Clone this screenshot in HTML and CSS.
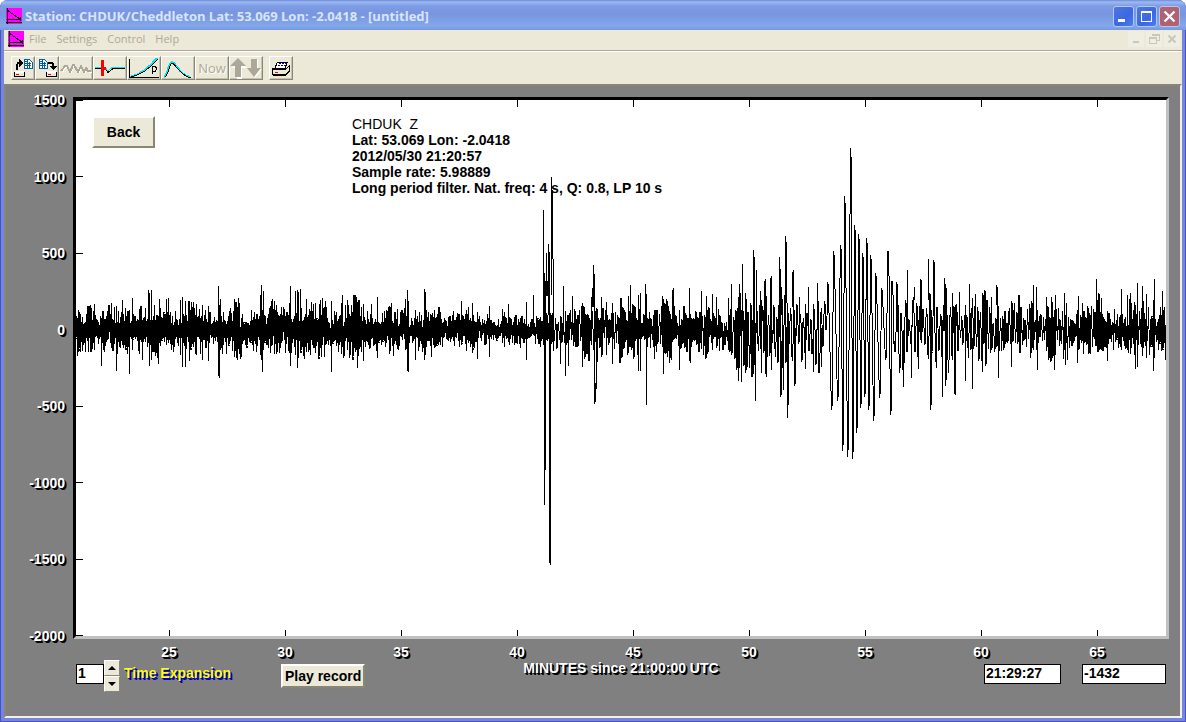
FILE: index.html
```html
<!DOCTYPE html>
<html lang="en">
<head>
    <meta charset="UTF-8">
    <meta name="viewport" content="width=device-width, initial-scale=1.0">
    <title>Station: CHDUK/Cheddleton</title>
    <link rel="stylesheet" href="styles.css">
</head>
<body>
    <div class="window">
        <!-- Title bar -->
        <header class="titlebar">
            <svg class="app-icon" viewBox="0 0 16 16" shape-rendering="crispEdges">
                <rect width="16" height="16" fill="#ff00ff"/>
                <path d="M1 0V16M0 14.5H16M1 2L14 11M1 11.5H15M14.5 9V13" stroke="#000" fill="none"/>
            </svg>
            <h1>Station: CHDUK/Cheddleton Lat: 53.069 Lon: -2.0418 - [untitled]</h1>
            <div class="window-buttons">
                <button type="button" aria-label="Minimize"><svg viewBox="0 0 19 19"><path d="M4 13.5H11" stroke="#fff" stroke-width="3"/></svg></button>
                <button type="button" aria-label="Maximize"><svg viewBox="0 0 19 19" shape-rendering="crispEdges"><path d="M4 5.5H15M4.5 5V14.5H14.5V5" fill="none" stroke="#fff"/><path d="M4 5H15" stroke="#fff" stroke-width="2"/></svg></button>
                <button type="button" class="close" aria-label="Close"><svg viewBox="0 0 19 19"><path d="M4.500 4.500L14.500 14.500M14.500 4.500L4.500 14.500" stroke="#fff" stroke-width="2.400"/></svg></button>
            </div>
        </header>

        <!-- Menu -->
        <nav class="menubar">
            <svg class="app-icon" viewBox="0 0 16 16" shape-rendering="crispEdges">
                <rect width="16" height="16" fill="#ff00ff"/>
                <path d="M1 0V16M0 14.5H16M1 2L14 11M1 11.5H15M14.5 9V13" stroke="#000" fill="none"/>
            </svg>
            <a href="#">File</a>
            <a href="#">Settings</a>
            <a href="#">Control</a>
            <a href="#">Help</a>
            <div class="child-buttons">
                <button type="button" aria-label="Minimize document"><svg viewBox="0 0 16 16"><path d="M5 11H11" stroke="#c9c7ba" stroke-width="2"/></svg></button>
                <button type="button" aria-label="Restore document"><svg viewBox="0 0 16 16" shape-rendering="crispEdges"><path d="M6.500 5V3.500H13.500V9.500H11M6 4H14M3.500 6.500H10.500V12.500H3.500ZM3 7H11" fill="none" stroke="#c9c7ba"/></svg></button>
                <button type="button" aria-label="Close document"><svg viewBox="0 0 16 16"><path d="M4.500 4.500L11.500 11.500M11.500 4.500L4.500 11.500" stroke="#c9c7ba" stroke-width="2"/></svg></button>
            </div>
        </nav>

        <!-- Toolbar -->
        <div class="toolbar">
            <button type="button" class="tool small" aria-label="Open">
                <svg viewBox="0 0 22 22" shape-rendering="crispEdges">
                    <path d="M12 2H17L20 5V11H12Z" fill="#fff" stroke="#0060a0"/>
                    <path d="M13 4.500H16M13 6.500H19M13 8.500H19M15.500 3V11M17.500 5V11" stroke="#0060a0"/>
                    <path d="M5 13V8L6 6H8" fill="none" stroke="#000" stroke-width="2"/>
                    <path d="M7 2L11 6L7 10Z" fill="#000"/>
                    <path d="M2.500 15.500H12.500V19.500H2.500Z" fill="#ece9d8" stroke="#000"/>
                    <path d="M3 14.500H12" stroke="#fff" stroke-width="2"/>
                    <path d="M4 17.500H7" stroke="#f00"/>
                </svg>
            </button>
            <button type="button" class="tool small" aria-label="Save">
                <svg viewBox="0 0 22 22" shape-rendering="crispEdges">
                    <path d="M3 2H8L11 5V11H3Z" fill="#fff" stroke="#0060a0"/>
                    <path d="M4 4.500H7M4 6.500H10M4 8.500H10M6.500 3V11M8.500 5V11" stroke="#0060a0"/>
                    <path d="M12 6H16L17 7V10" fill="none" stroke="#000" stroke-width="2"/>
                    <path d="M13 9H21L17 13Z" fill="#000"/>
                    <path d="M10.500 15.500H20.500V19.500H10.500Z" fill="#ece9d8" stroke="#000"/>
                    <path d="M11 14.500H20" stroke="#fff" stroke-width="2"/>
                    <path d="M12 17.500H15" stroke="#f00"/>
                </svg>
            </button>
            <button type="button" class="tool" aria-label="Waveform" disabled>
                <svg viewBox="0 0 32 22" shape-rendering="crispEdges">
                    <path d="M2 14L5 9H7L10 15L13 8H14L18 15L21 9L24 15L26 11L28 14H32" fill="none" stroke="#fff" transform="translate(1 1)"/>
                    <path d="M1 14L5 9H7L10 15L13 8H14L18 15L21 9L24 15L26 11L28 14H31" fill="none" stroke="#aca899" stroke-width="2"/>
                </svg>
            </button>
            <button type="button" class="tool" aria-label="Event">
                <svg viewBox="0 0 32 22" shape-rendering="crispEdges">
                    <path d="M1 10.500H11L14 14L18 10.500H31" fill="none" stroke="#00e5ee"/>
                    <path d="M1 11.500H11L14 15.500L19 11.500H31" fill="none" stroke="#000"/>
                    <path d="M8.500 3V19" stroke="#f00" stroke-width="3"/>
                    <path d="M7 11.500H12" stroke="#f00" stroke-width="3"/>
                </svg>
            </button>
            <button type="button" class="tool" aria-label="Travel time">
                <svg viewBox="0 0 32 22" shape-rendering="crispEdges">
                    <path d="M2 20Q16 17 29 1" fill="none" stroke="#00e5ee" stroke-width="2"/>
                    <path d="M3 20Q17 17 30 2M1.500 2V20.500H31M24.500 9V17M24 9.500H27L28.500 11V12L27 14.500H24" fill="none" stroke="#000"/>
                </svg>
            </button>
            <button type="button" class="tool" aria-label="Spectrum">
                <svg viewBox="0 0 32 22" shape-rendering="crispEdges">
                    <path d="M2 20C7 16 6 5 10 5S17 18 28 20" fill="none" stroke="#00e5ee" stroke-width="2"/>
                    <path d="M3 20C8 16 7 6 10 6S18 19 29 21" fill="none" stroke="#000"/>
                </svg>
            </button>
            <button type="button" class="tool now" disabled>Now</button>
            <button type="button" class="tool" aria-label="Scroll" disabled>
                <svg viewBox="0 0 32 22">
                    <path d="M9 3L17 11H12V22H7V11H2ZM22 3H28V12H32L25 21L18 12H22Z" fill="#fff"/>
                    <path d="M8 1L16 9H11V20H5V9H0ZM21 2H27V11H31L24 20L17 11H21Z" fill="#aca899"/>
                </svg>
            </button>
            <button type="button" class="tool small print" aria-label="Print">
                <svg viewBox="0 0 22 22" shape-rendering="crispEdges">
                    <path d="M7.500 5H17.500L15 11H5Z" fill="#fff" stroke="#000"/>
                    <path d="M9 6.500H16M8 8.500H15" stroke="#0000c0" stroke-dasharray="2 1"/>
                    <path d="M2.500 11.500H16L19.500 9V14L16 17.500H2.500Z" fill="#ece9d8" stroke="#000"/>
                    <path d="M3 12.500H16M3 18.500H15L19 15" fill="none" stroke="#000"/>
                    <path d="M5 15.500H8" stroke="#f00"/>
                </svg>
            </button>
        </div>

        <!-- Seismogram -->
        <main class="client">
            <div class="chart">
                <div class="y-labels">
                    <span>1500</span>
                    <span>1000</span>
                    <span>500</span>
                    <span>0</span>
                    <span>-500</span>
                    <span>-1000</span>
                    <span>-1500</span>
                    <span>-2000</span>
                </div>
                <div class="plot">
                    <svg class="trace" viewBox="0 0 1090 536" preserveAspectRatio="none" shape-rendering="crispEdges">
                        <path class="line" d="M0 .5H7M0 76.500H7M0 153.500H7M0 229.500H7M0 306.500H7M0 382.500H7M0 459.500H7M0 535.500H7"/>
                        <path class="line" d="M93.500 0V7M209.500 0V7M325.500 0V7M441.500 0V7M557.500 0V7M673.500 0V7M789.500 0V7M905.500 0V7M1021.500 0V7"/>
                        <path class="line" d="M93.500 530V536M209.500 530V536M325.500 530V536M441.500 530V536M557.500 530V536M673.500 530V536M789.500 530V536M905.500 530V536M1021.500 530V536"/>
                        <path class="line" id="noise"/>
                        <path class="line" id="peaks"/>
                    </svg>
                    <button type="button" class="button back">Back</button>
                    <div class="info">
                        <p class="channel">CHDUK&nbsp; Z</p>
                        <p>Lat: 53.069 Lon: -2.0418</p>
                        <p>2012/05/30 21:20:57</p>
                        <p>Sample rate: 5.98889</p>
                        <p>Long period filter. Nat. freq: 4 s, Q: 0.8, LP 10 s</p>
                    </div>
                </div>
            </div>
            <div class="x-labels">
                <span>25</span>
                <span>30</span>
                <span>35</span>
                <span>40</span>
                <span>45</span>
                <span>50</span>
                <span>55</span>
                <span>60</span>
                <span>65</span>
            </div>
            <div class="controls">
                <div class="controls-left">
                    <input type="text" class="field count" id="expansion" value="1">
                    <div class="spinner">
                        <button type="button" aria-label="Increase"><svg viewBox="0 0 8 4"><path d="M4 0L8 4H0Z"/></svg></button>
                        <button type="button" aria-label="Decrease"><svg viewBox="0 0 8 4"><path d="M0 0H8L4 4Z"/></svg></button>
                    </div>
                    <label class="expansion-label" for="expansion">Time Expansion</label>
                    <button type="button" class="button play">Play record</button>
                </div>
                <p class="axis-title">MINUTES since 21:00:00 UTC</p>
                <div class="controls-right">
                    <input type="text" class="field time" value="21:29:27" aria-label="Time">
                    <input type="text" class="field value" value="-1432" aria-label="Value">
                </div>
            </div>
        </main>
    </div>
    <script src="script.js"></script>
</body>
</html>
```
FILE: styles.css
```css
* {
    box-sizing: border-box;
}
body {
    margin: 0;
    background: #fff;
    font-family: "Liberation Sans", Arial, sans-serif;
    font-size: 14px;
    font-weight: bold;
    line-height: 16px;
    color: #000;
}
h1, p {
    margin: 0;
}
button, input {
    font: inherit;
    color: inherit;
    padding: 0;
}
svg {
    display: block;
}
.window {
    display: flex;
    flex-direction: column;
    min-height: 100vh;
    padding: 0 4px 4px;
    background: #7487dc;
    border-radius: 8px 8px 0 0;
    box-shadow: inset 1px -1px #4c4fc0, inset -1px 0 #4c4fc0;
}
/* Title bar */
.titlebar {
    display: flex;
    align-items: center;
    height: 30px;
    margin: 0 -4px;
    padding: 2px 6px 0 6px;
    border-radius: 8px 8px 0 0;
    background: linear-gradient(#6d88dc, #9db9f0 2px, #7d9ce5 6px, #7995df 14px, #82a8ea 26px, #7996df);
}
.app-icon {
    width: 16px;
    height: 16px;
}
.titlebar h1 {
    flex: 1;
    margin-left: 3px;
    font-family: "Open Sans", "Noto Sans", sans-serif;
    font-size: 13px;
    color: #d8e4f8;
    white-space: nowrap;
}
.window-buttons {
    display: flex;
    gap: 2px;
}
.window-buttons button {
    width: 21px;
    height: 21px;
    border: 1px solid #b5c6f3;
    border-radius: 3px;
    background: linear-gradient(135deg, #5077e0, #3a68e4 60%, #4b7df0);
}
.window-buttons .close {
    background: #b1616f;
}
/* Menu */
.menubar {
    display: flex;
    align-items: center;
    height: 21px;
    padding: 0 2px 2px 4px;
    background: #ece9d8;
    border-bottom: 1px solid #aca899;
    font-family: "Open Sans", "Noto Sans", sans-serif;
    font-size: 11px;
    font-weight: normal;
}
.menubar a {
    margin-left: 5px;
    margin-right: 5px;
    color: #aca899;
    text-decoration: none;
}
.child-buttons {
    display: flex;
    gap: 2px;
    margin-left: auto;
}
.child-buttons button {
    width: 16px;
    height: 16px;
    border: 0;
    background: #efeee3;
}
/* Toolbar */
.toolbar {
    display: flex;
    height: 33px;
    padding: 4px 7px;
    background: #ece9d8;
    border-top: 1px solid #fff;
}
.tool {
    width: 34px;
    height: 24px;
    border: 1px solid;
    border-color: #fff #8a8674 #8a8674 #fff;
    background: #ece9d8;
    box-shadow: inset -1px -1px #c5c2b2;
}
.tool.small {
    width: 24px;
}
.tool svg {
    width: 100%;
    height: 22px;
}
.tool.now {
    font-family: "Open Sans", "Noto Sans", sans-serif;
    font-size: 13px;
    font-weight: normal;
    color: #aca899;
    text-shadow: 1px 1px #fff;
}
.tool.print {
    margin-left: 6px;
}
/* Seismogram */
.client {
    flex: 1;
    display: flex;
    flex-direction: column;
    padding: 11px 11px 24px 0;
    background: #808080;
    border: 2px solid;
    border-color: #8a8674 #f4f1e6 #f4f1e6 #8a8674;
}
.chart {
    flex: 1;
    display: flex;
}
.y-labels {
    width: 67px;
    margin: -5px 0;
    padding-right: 8px;
    display: flex;
    flex-direction: column;
    justify-content: space-between;
    text-align: right;
}
.y-labels,
.x-labels,
.axis-title {
    color: #fff;
    text-shadow: 1px 1px #000, 2px 2px #000;
}
.plot {
    flex: 1;
    position: relative;
    min-height: 300px;
    background: #fff;
    border: 3px solid;
    border-color: #000 #c0c0c0 #c0c0c0 #000;
}
.trace {
    position: absolute;
    width: 100%;
    height: 100%;
}
.line {
    fill: none;
    stroke: #000;
    vector-effect: non-scaling-stroke;
}
.button {
    background: #ece9d8;
    border: 2px solid;
    border-color: #fff #8a8674 #8a8674 #fff;
}
.back {
    position: absolute;
    left: 16px;
    top: 16px;
    width: 63px;
    height: 32px;
}
.info {
    position: absolute;
    left: 276px;
    top: 16px;
}
.channel {
    font-weight: normal;
}
.x-labels {
    display: grid;
    grid-template-columns: repeat(9, 1fr);
    margin: 5px 0 0 67px;
    padding: 0 14px 0 38px;
    text-align: center;
}
.controls {
    display: grid;
    grid-template-columns: 1fr auto 1fr;
    align-items: start;
    padding: 0 3px 0 70px;
}
.controls-left,
.controls-right {
    display: flex;
    align-items: flex-start;
}
.controls-right {
    justify-content: flex-end;
    gap: 21px;
}
.field {
    height: 20px;
    margin-top: 4px;
    padding: 0 1px 2px;
    border: 1px solid #000;
    border-radius: 0;
    background: #fff;
}
.count {
    width: 28px;
}
.time {
    width: 77px;
}
.value {
    width: 84px;
}
.spinner {
    display: flex;
    flex-direction: column;
}
.spinner button {
    display: flex;
    align-items: center;
    justify-content: center;
    width: 16px;
    height: 16px;
    background: #ece9d8;
    border: 1px solid;
    border-color: #fff #8a8674 #8a8674 #fff;
}
.spinner svg {
    width: 8px;
    height: 4px;
}
.expansion-label {
    margin: 5px 0 0 4px;
    color: #ff0;
    text-shadow: 1px 1px #0000c0, 2px 2px #0000c0;
}
.play {
    width: 84px;
    height: 24px;
    margin: 4px 0 0 50px;
}
.controls .button {
    white-space: nowrap;
}
```
FILE: script.js
```js
// Plot origin and zero line
const LEFT = 76;
const TOP = 100;
const ZERO = 329;

// [x, amplitude, step] of the background noise
const envelope = [
    [76, 26, 0.6], [150, 30, 0.6], [210, 28, 0.6], [300, 32, 0.6], [350, 34, 0.6], [400, 27, 0.6],
    [430, 24, 0.6], [540, 18, 0.6], [556, 28, 1.1], [620, 32, 0.9], [690, 31, 0.9], [720, 26, 1],
    [740, 46, 1.2], [790, 44, 1.3], [824, 38, 1.6], [893, 46, 1.7], [930, 46, 1.7], [960, 42, 1.3],
    [1000, 35, 1], [1050, 32, 0.9], [1110, 33, 0.8], [1166, 37, 0.8]
];

// Surface waves
const surface = [
    [826, 330], [827.5, 282], [831.5, 410], [833.5, 251], [837.5, 401], [840.5, 245],
    [842.5, 451], [844.5, 196], [847.5, 457], [850.5, 148], [852.5, 459], [854.5, 225],
    [856.5, 433], [858.5, 234], [860.5, 408], [862.5, 253], [864.5, 397], [866.5, 238],
    [868.5, 410], [870.5, 255], [873.5, 421], [875.5, 273], [879.5, 398], [881.5, 288],
    [885.5, 360], [888, 251], [890.5, 415], [892, 281], [894, 343]
];

// [x, top, bottom] of single peaks
const peaks = [
    [77, 318, 352], [78, 310, 352], [94, 304, 350], [101, 318, 366], [111, 303, 348], [116, 306, 371], [129, 310, 374],
    [132, 298, 350], [148, 290, 340], [149, 293, 366], [151, 290, 360], [142, 320, 360], [166, 299, 345],
    [168, 298, 343], [180, 300, 355], [182, 297, 367], [185, 301, 367], [196, 304, 355], [202, 305, 360],
    [208, 306, 361], [218, 286, 376], [219, 305, 378], [220, 299, 350], [234, 299, 357], [239, 303, 347],
    [260, 295, 355], [261, 285, 360], [262, 310, 372], [263, 291, 350], [272, 299, 345], [290, 286, 366],
    [289, 303, 340], [295, 291, 355], [297, 290, 368], [298, 292, 358], [300, 289, 345], [313, 304, 348],
    [320, 300, 348], [325, 301, 345], [331, 301, 372], [342, 295, 346], [347, 300, 350], [357, 302, 368],
    [363, 304, 361], [377, 297, 358], [389, 306, 352], [405, 299, 350], [407, 290, 371], [408, 301, 372],
    [415, 310, 360], [424, 289, 360], [425, 292, 355], [431, 315, 357], [461, 301, 345], [472, 303, 353],
    [477, 312, 359], [489, 306, 357], [508, 304, 342], [526, 302, 360], [533, 295, 335],
    // first arrival
    [543, 210, 345], [544, 273, 505], [545, 281, 470], [546, 253, 296], [547, 281, 296], [548, 244, 315],
    [549, 252, 563], [550, 318, 565], [551, 177, 295], [552, 190, 259], [553, 259, 351],
    [560, 330, 364], [563, 286, 330], [565, 318, 376], [568, 315, 366], [572, 296, 335], [582, 303, 367],
    [591, 297, 345], [592, 288, 307], [593, 265, 307], [594, 274, 404], [595, 383, 402], [596, 330, 389],
    [597, 322, 362], [601, 297, 325], [606, 302, 355], [612, 303, 364], [628, 296, 350], [630, 285, 338],
    [638, 295, 371], [640, 293, 371], [645, 284, 330], [646, 294, 405], [662, 296, 333], [663, 299, 374],
    [672, 290, 335], [673, 288, 332], [679, 310, 370], [689, 288, 361], [690, 314, 363], [701, 291, 340],
    [706, 296, 335], [712, 294, 350], [716, 297, 348], [728, 298, 350], [731, 284, 355], [738, 297, 381],
    [739, 284, 340], [741, 310, 382], [742, 264, 330], [745, 296, 373], [752, 320, 377], [753, 250, 374],
    [754, 257, 353], [755, 323, 401], [756, 270, 333], [760, 291, 340], [761, 300, 373], [764, 281, 340],
    [765, 279, 374], [766, 296, 377], [770, 278, 350], [771, 276, 370], [779, 257, 300], [780, 269, 397],
    [781, 341, 395], [783, 335, 390], [785, 236, 303], [786, 242, 303], [787, 303, 418], [788, 313, 405],
    [792, 272, 307], [793, 270, 337], [794, 328, 386], [795, 328, 384], [799, 297, 335], [805, 304, 369],
    [808, 287, 340], [813, 304, 372], [817, 283, 300], [821, 328, 367],
    [896, 282, 330], [897, 284, 332], [903, 330, 387], [907, 270, 340], [911, 325, 378], [914, 287, 300],
    [920, 279, 316], [921, 280, 340], [918, 320, 369], [928, 259, 300], [930, 315, 410], [931, 310, 405],
    [933, 260, 307], [934, 262, 320], [936, 335, 368], [942, 320, 397], [944, 278, 330], [945, 284, 386],
    [946, 288, 380], [952, 293, 360], [954, 320, 394], [955, 305, 395], [959, 292, 325], [965, 305, 381],
    [969, 284, 330], [972, 338, 389], [975, 294, 330], [982, 301, 372], [991, 297, 350], [996, 285, 305],
    [997, 287, 320], [998, 325, 378], [1011, 301, 367], [1033, 285, 350], [1036, 287, 350], [1037, 310, 370],
    [1046, 297, 340], [1054, 310, 370], [1055, 295, 355], [1064, 293, 350], [1065, 315, 365], [1078, 296, 350],
    [1077, 310, 363], [1096, 279, 330], [1101, 298, 350], [1107, 315, 361], [1121, 289, 350], [1127, 295, 350],
    [1137, 283, 367], [1135, 305, 369], [1142, 286, 330], [1146, 294, 358], [1153, 300, 371], [1154, 279, 358],
    [1162, 291, 336], [1165, 325, 360]
];

// Repeatable random numbers, so the record looks the same on every load
let seed = 2012;
function random() {
    seed = (seed * 16807) % 2147483647;
    return seed / 2147483647;
}

function envelopeAt(x) {
    let i = 1;
    while (i < envelope.length - 1 && envelope[i][0] < x) {
        i++;
    }
    const a = envelope[i - 1];
    const b = envelope[i];
    const t = (x - a[0]) / (b[0] - a[0]);
    return [a[1] + (b[1] - a[1]) * t, a[2] + (b[2] - a[2]) * t];
}

// A swing has a sharp tip and a slightly shorter shoulder beside it
function addSwing(x, y, width) {
    points.push([x, y]);
    points.push([x + width, ZERO + (y - ZERO) * 0.92]);
}

const points = [];
let sign = 1;
let x = LEFT;
while (x < 1165) {
    if (x > 825 && x < 894) {
        surface.forEach(function(p) { addSwing(p[0], p[1], 0.8); });
        x = 895;
    }
    const [amplitude, step] = envelopeAt(x);
    const group = 0.8 + 0.3 * Math.sin(x / 3.7) * Math.sin(x / 9.1);
    const y = ZERO + 1 + sign * amplitude * group * (0.3 + 0.75 * random());
    addSwing(x, y, step > 0.8 ? 0.6 : 0);
    sign = -sign;
    x += step * (0.8 + 0.6 * random());
}

document.getElementById('noise').setAttribute('d', 'M' + points.map(function(p) {
    return (p[0] - LEFT).toFixed(1) + ' ' + (p[1] - TOP).toFixed(1);
}).join('L'));

document.getElementById('peaks').setAttribute('d', peaks.map(function(p) {
    return 'M' + (p[0] - LEFT + 0.5) + ' ' + (p[1] - TOP) + 'V' + (p[2] - TOP);
}).join(''));
```
